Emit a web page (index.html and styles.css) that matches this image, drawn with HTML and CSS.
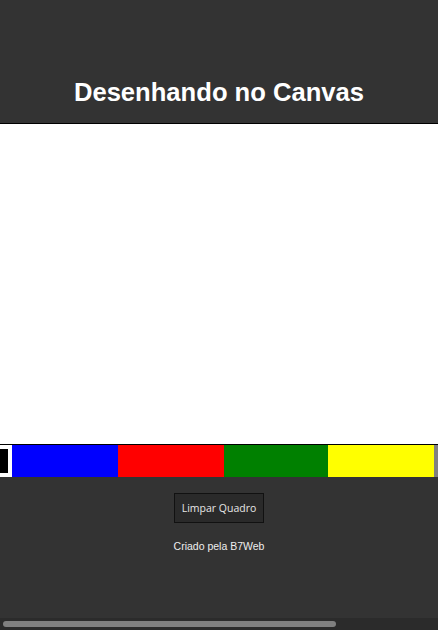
FILE: index.html
```html
<!DOCTYPE html>
<html lang="pt-BR">
<head>
<meta charset="utf-8">
<title>Desenhando no Canvas</title>
<link rel="stylesheet" href="styles.css">
</head>
<body>
<div class="viewport">
  <div class="page">
    <header class="header">
      <h1 class="title">Desenhando no Canvas</h1>
    </header>
    <main class="stage">
      <div class="board"></div>
    </main>
    <div class="colors">
      <div class="color active" style="background:#000"></div>
      <div class="color" style="background:#0000ff"></div>
      <div class="color" style="background:#ff0000"></div>
      <div class="color narrow" style="background:#008000"></div>
      <div class="color" style="background:#ffff00"></div>
      <div class="color" style="background:#808080"></div>
    </div>
    <div class="actions">
      <button class="clear">Limpar Quadro</button>
      <p class="credit">Criado pela B7Web</p>
    </div>
  </div>
  <div class="hscroll"><div class="hscroll-thumb"></div></div>
</div>
</body>
</html>
```
FILE: styles.css
```css
html {
  background: #333333;
}
body {
  margin: 0;
  font-family: "Liberation Sans", Arial, sans-serif;
  color: #ffffff;
}
.viewport {
  height: 100vh;
  display: flex;
  flex-direction: column;
  overflow: hidden;
}
.page {
  flex: 1;
  min-height: 0;
  overflow: hidden;
}
.hscroll {
  flex: none;
  height: 12px;
  background: #2b2b2b;
  padding: 3px 3px;
  box-sizing: border-box;
}
.hscroll-thumb {
  width: 333px;
  height: 6px;
  border-radius: 3px;
  background: #808080;
}
.header {
  height: 123px;
  display: flex;
  align-items: flex-end;
  justify-content: center;
}
.title {
  margin: 0 0 16px;
  font-size: 25.6px;
  font-weight: bold;
  line-height: 30px;
}
.stage {
  display: flex;
  justify-content: center;
}
.board {
  flex: none;
  width: 698px;
  height: 320px;
  background: #ffffff;
  border: 1px solid #000000;
}
.colors {
  display: flex;
  margin-left: -94px;
}
.color {
  flex: none;
  width: 106px;
  height: 32px;
  box-sizing: border-box;
}
.color.narrow {
  width: 104px;
}
.color.active {
  border: 4px solid #ffffff;
}
.actions {
  display: flex;
  flex-direction: column;
  align-items: center;
  padding-top: 16px;
}
.clear {
  width: 90px;
  height: 30px;
  padding: 0;
  background: #2a2a2a;
  border: 1px solid #111111;
  color: #e6e6e6;
  font-family: "Open Sans", sans-serif;
  font-size: 10.5px;
}
.credit {
  margin: 17px 0 0;
  font-size: 10.5px;
  color: #eeeeee;
}
```
